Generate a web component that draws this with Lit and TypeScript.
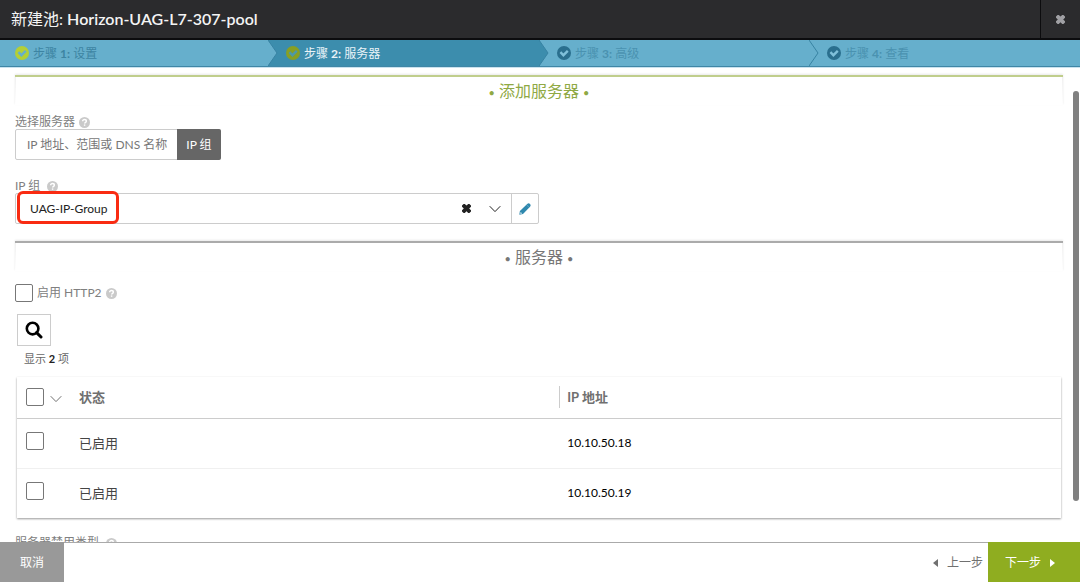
import { LitElement, html, css, svg, nothing } from "lit";
import { customElement, state } from "lit/decorators.js";
import { classMap } from "lit/directives/class-map.js";

const checkIcon = html`<svg class="check" viewBox="0 0 14 14" aria-hidden="true">
  <circle cx="7" cy="7" r="7" fill="currentColor"></circle>
  <path d="M3.4 6.2 6.4 9.2 10.8 4.8" fill="none" class="tick" stroke-width="2.4"></path>
</svg>`;

const helpIcon = html`<svg class="help" viewBox="0 0 12 12" role="img" aria-label="帮助">
  <circle cx="6" cy="6" r="6" fill="#cacaca"></circle>
  <path d="M4 4.7C4 3.4 4.9 2.8 6 2.8s2 .7 2 1.8C8 5.8 6.1 5.8 6.1 7.2" fill="none" stroke="#fff" stroke-width="1.6"></path>
  <rect x="5.3" y="8.1" width="1.6" height="1.5" fill="#fff"></rect>
</svg>`;

const crossPath = svg`<path d="M0 1.6 1.6 0h1.2L4.5 1.6 6.2 0h1.2L9 1.6v1.1L7.2 4.5 9 6.3v1.1L7.4 9H6.2L4.5 7.3 2.8 9H1.6L0 7.4V6.3L1.8 4.5 0 2.7z" fill="currentColor"></path>`;

const chevron = html`<svg class="chevron" viewBox="0 0 12 8" aria-hidden="true">
  <path d="M.7 1.2 6 6.6 11.3 1.2" fill="none" stroke="currentColor"></path>
</svg>`;

@customElement("wizard-steps")
class WizardSteps extends LitElement {
  static properties = { current: { type: Number } };
  declare current: number;

  static styles = css`
    :host { display: block; }
    .steps {
      display: grid;
      grid-template-columns: repeat(4, 1fr);
      margin: 0;
      padding: 0;
      list-style: none;
      height: 27px;
      box-sizing: border-box;
      border-bottom: 1px solid #3f86a6;
      box-shadow: 0 1px 0 #c9e2ee;
      background: #66afcc;
      font-size: 12px;
      line-height: 16px;
    }
    .step { display: flex; align-items: center; gap: 4px; color: #4a92b0; }
    .step:first-child { padding-left: 15px; }
    .done { color: #3d84a2; }
    .active { color: #e9f3f8; background: #3c8dad; margin-left: -2px; }
    .arrow { display: block; width: 10px; height: 26px; margin-left: -1px; margin-right: 4px; }
    .active .arrow { margin-left: 0; }
    .check { width: 14px; height: 14px; color: #2a6f8e; }
    .tick { stroke: #7fc0da; }
    .done .check { color: #b3cf36; }
    .done .tick { stroke: #66afcc; }
    .active .check { color: #879f24; }
    .active .tick { stroke: #4c98a8; }
    .label { padding-top: 2px; }
    .num { font-weight: 700; }
  `;

  steps = ["设置", "服务器", "高级", "查看"];

  render() {
    return html`<ol class="steps">
      ${this.steps.map((name, i) => {
        const n = i + 1;
        return html`<li class=${classMap({ step: true, done: n < this.current, active: n === this.current })}>
          ${i
            ? html`<svg class="arrow" viewBox="0 0 10 26" aria-hidden="true">
                <path d="M0 0 9 13 0 26z" fill=${i === this.current ? "#3c8dad" : "#66afcc"}></path>
                <path d="M0 0 9 13 0 26" fill="none" stroke="#3883a3"></path>
              </svg>`
            : nothing}
          ${checkIcon}<span class="label">步骤 <span class="num">${n}:</span> ${name}</span>
        </li>`;
      })}
    </ol>`;
  }
}

@customElement("app-root")
export class AppRoot extends LitElement {
  static styles = css`
    :host {
      display: flex;
      flex-direction: column;
      height: 100vh;
      overflow: hidden;
      position: relative;
      background: #fff;
      color: #808080;
      font-family: Lato, "Noto Sans CJK SC", sans-serif;
      font-size: 12px;
      line-height: 16px;
    }
    * { box-sizing: border-box; }
    button, select, input { font: inherit; color: inherit; margin: 0; }
    button { cursor: pointer; padding: 0; border: 0; background: none; }

    .titlebar {
      flex: none;
      display: flex;
      align-items: stretch;
      height: 40px;
      background: #2b2b2d;
      border-bottom: 2px solid #0c0c0e;
      color: #f4f4f4;
    }
    .title { flex: 1; margin: 0; padding-left: 11px; font-size: 16px; line-height: 38px; font-weight: 400; }
    .name { font-weight: 600; }
    .close { width: 40px; border-left: 1px solid #0c0c0e; color: #a0a0a4; display: grid; place-items: center; }
    .cross { width: 9px; height: 9px; }

    .body { flex: 1; min-height: 0; overflow-y: auto; scrollbar-width: none; padding: 8px 17px 0 15px; }
    .section {
      margin: 0;
      height: 30px;
      border-top: 2px solid #ababab;
      box-shadow: 0 -1px 2px #e9e9e9;
      background:
        linear-gradient(#f0f0f0, #fff) left / 1px 100% no-repeat,
        linear-gradient(#f0f0f0, #fff) right / 1px 100% no-repeat,
        #fff;
      text-align: center;
      font-size: 16px;
      line-height: 28px;
      font-weight: 400;
      color: #777;
    }
    .primary { border-color: #c0ce8c; color: #8fa944; }
    .dot { font-size: 11px; vertical-align: middle; }
    .field { display: flex; flex-direction: column; align-items: flex-start; margin-top: 8px; }
    .caption { display: flex; align-items: center; gap: 4px; height: 16px; padding-top: 2px; }
    .wide { gap: 7px; }
    .help { width: 11px; height: 11px; flex: none; }
    .group { display: flex; height: 31px; border: 1px solid #ccc; border-radius: 2px; }
    .option { padding: 0 11px; color: #777; }
    .chosen { background: #666; color: #fff; margin: -1px; padding: 0 9px; border-radius: 0 2px 2px 0; }
    .spaced { margin-top: 17px; margin-bottom: 17px; }
    .picker { position: relative; width: 50%; display: flex; height: 31px; border: 1px solid #ccc; border-radius: 2px; color: #222; }
    .combo { flex: 1; display: grid; align-items: center; }
    .select {
      grid-area: 1 / 1;
      appearance: none;
      width: 100%;
      height: 29px;
      padding: 0 0 0 14px;
      border: 0;
      background: none;
    }
    .tools { grid-area: 1 / 1; justify-self: end; display: flex; align-items: center; gap: 18px; padding-right: 10px; pointer-events: none; }
    .clear { pointer-events: auto; display: flex; }
    .chevron { width: 12px; height: 8px; flex: none; }
    .edit { width: 27px; border-left: 1px solid #ccc; color: #2f88ae; display: grid; place-items: center; }
    .pencil { width: 12px; height: 12px; }
    .highlight { position: absolute; left: 1px; top: -3px; width: 102px; height: 33px; border: 3px solid #f92b12; border-radius: 6px; pointer-events: none; }

    .tickbox { appearance: none; display: block; width: 18px; height: 18px; border: 1px solid #777; border-radius: 2px; background: #fff; }
    .tickbox:checked { background: #3c8dad; }
    .toggle { display: flex; align-items: center; gap: 4px; margin-top: 13px; }
    .list { margin: 12px 2px 0; }
    .search { width: 34px; height: 32px; border: 1px solid #ccc; display: grid; place-items: center; color: #000; }
    .lens { width: 18px; height: 18px; }
    .count { margin: 5px 0 10px 7px; font-size: 11px; color: #666; }
    .strong { font-weight: 700; color: #222; }
    .table { width: 100%; table-layout: fixed; border-collapse: collapse; font-size: 13px; box-shadow: 0 1px 2px #999; color: #444; }
    .pick { width: 62px; }
    .status { width: 46%; }
    .table th { height: 41px; padding: 0; text-align: left; font-weight: 700; color: #707070; border-bottom: 1px solid #ccc; }
    .table td { height: 50px; padding: 0; border-bottom: 1px solid #f0f0f0; }
    .table tr:last-child td { border-bottom: 0; }
    .cell { display: flex; align-items: center; gap: 6px; padding-left: 9px; }
    .cell .chevron { margin-top: 4px; }
    .table td .cell { padding-bottom: 4px; }
    .divided { border-left: 1px solid #ccc; padding-left: 7px; line-height: 22px; }
    .address { padding-left: 8px; font-size: 12px; color: #000; }
    .tail { margin-top: 16px; }
    .thumb { position: absolute; right: 1px; top: 91px; bottom: 81px; width: 6px; border-radius: 3px; background: #808080; }

    .footer { flex: none; display: flex; height: 40px; border-top: 1px solid #aaa; background: #fff; position: relative; }
    .footer button { padding-top: 2px; margin-top: -1px; }
    .cancel { width: 64px; background: #999; color: #fff; }
    .footer .prev { margin-left: auto; padding-right: 5px; display: flex; align-items: center; gap: 9px; color: #707070; }
    .footer .next { width: 92px; padding-left: 17px; background: #8fad20; color: #fff; display: flex; align-items: center; gap: 9px; }
    .caret { width: 5px; height: 8px; }
  `;

  @state() group = "UAG-IP-Group";
  servers = ["10.10.50.18", "10.10.50.19"];

  render() {
    const dot = html`<span class="dot">•</span>`;
    return html`
      <header class="titlebar">
        <h1 class="title">新建池: <span class="name">Horizon-UAG-L7-307-pool</span></h1>
        <button class="close" aria-label="关闭"><svg class="cross" viewBox="0 0 9 9">${crossPath}</svg></button>
      </header>
      <wizard-steps current="2"></wizard-steps>

      <main class="body">
        <h2 class="section primary">${dot} 添加服务器 ${dot}</h2>
        <div class="field">
          <span class="caption" id="mode">选择服务器 ${helpIcon}</span>
          <div class="group" role="group" aria-labelledby="mode">
            <button class="option">IP 地址、范围或 DNS 名称</button>
            <button class="option chosen" aria-pressed="true">IP 组</button>
          </div>
        </div>
        <div class="field spaced">
          <label class="caption wide" for="ipgroup">IP 组 ${helpIcon}</label>
          <div class="picker">
            <div class="combo">
              <select class="select" id="ipgroup"><option>${this.group}</option></select>
              <span class="tools">
                <button class="clear" aria-label="清除"><svg class="cross" viewBox="0 0 9 9">${crossPath}</svg></button>
                ${chevron}
              </span>
            </div>
            <button class="edit" aria-label="编辑">
              <svg class="pencil" viewBox="0 0 12 12">
                <path d="M.3 11.7 .9 8 8.2 1Q9.7-.3 11 1 12.3 2.3 11 3.8L4 11z" fill="currentColor"></path>
                <path d="M1.2 10.8 1.7 8.9 3.2 10.4z" fill="#fff"></path>
                <path d="M7.6 1.8 10.3 4.5" stroke="#8fc0d4" stroke-width=".5"></path>
              </svg>
            </button>
            <span class="highlight"></span>
          </div>
        </div>

        <h2 class="section">${dot} 服务器 ${dot}</h2>
        <div class="toggle">
          <input class="tickbox" type="checkbox" id="http2" />
          <label for="http2">启用 HTTP2</label>${helpIcon}
        </div>
        <div class="list">
          <button class="search" aria-label="搜索">
            <svg class="lens" viewBox="0 0 18 18">
              <circle cx="7.6" cy="7.6" r="5.8" fill="none" stroke="currentColor" stroke-width="2.6"></circle>
              <path d="M11.6 11.6 16 16" stroke="currentColor" stroke-width="3" stroke-linecap="round"></path>
            </svg>
          </button>
          <p class="count">显示 <span class="strong">2</span> 项</p>
          <table class="table">
            <thead>
              <tr>
                <th class="pick"><div class="cell"><input class="tickbox" type="checkbox" aria-label="全选" />${chevron}</div></th>
                <th class="status">状态</th>
                <th><div class="divided">IP 地址</div></th>
              </tr>
            </thead>
            <tbody>
              ${this.servers.map(
                (ip) => html`<tr>
                  <td><div class="cell"><input class="tickbox" type="checkbox" aria-label=${ip} /></div></td>
                  <td>已启用</td>
                  <td><div class="address">${ip}</div></td>
                </tr>`
              )}
            </tbody>
          </table>
        </div>
        <div class="caption wide tail">服务器禁用类型 ${helpIcon}</div>
      </main>
      <span class="thumb"></span>

      <footer class="footer">
        <button class="cancel">取消</button>
        <button class="prev"><svg class="caret" viewBox="0 0 5 8"><path d="M5 0 0 4l5 4z" fill="currentColor"></path></svg>上一步</button>
        <button class="next">下一步<svg class="caret" viewBox="0 0 5 8"><path d="M0 0 5 4 0 8z" fill="currentColor"></path></svg></button>
      </footer>
    `;
  }
}
